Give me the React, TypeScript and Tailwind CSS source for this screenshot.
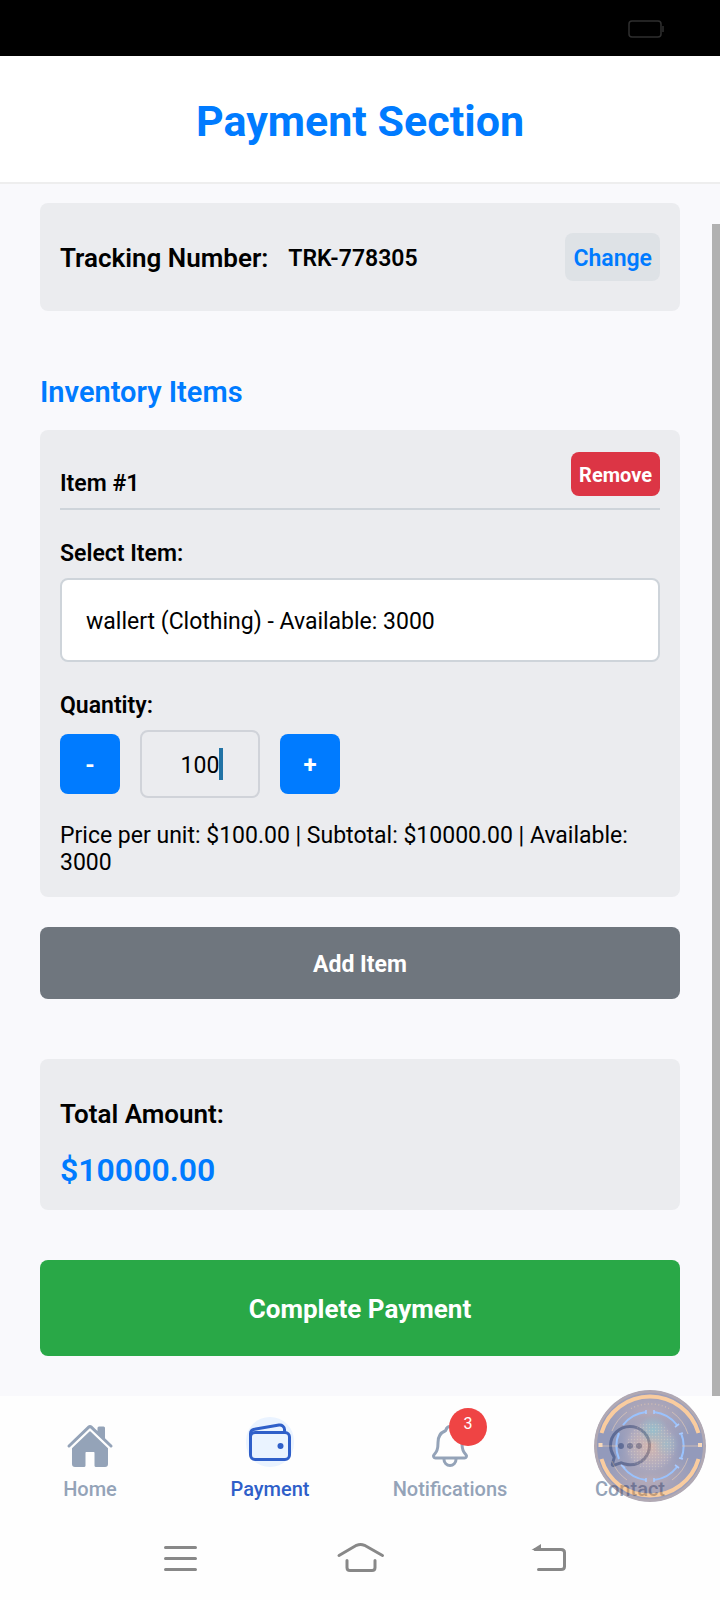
import type { ReactNode } from "react";
import { useState } from "react";
import {
  IoChatbubbleEllipsesOutline,
  IoHome,
  IoNotificationsOutline,
  IoWalletOutline,
} from "react-icons/io5";

function StatusBar() {
  return (
    <div className="flex h-14 items-center justify-end bg-black pt-0.5 pr-[55px]">
      <svg width="38" height="20" viewBox="0 0 38 20" fill="none" aria-hidden="true">
        <rect x="2" y="2" width="32" height="16" rx="3" stroke="#2f2f2f" strokeWidth="1.5" />
        <path d="M36 7v6" stroke="#2f2f2f" strokeWidth="1.5" />
      </svg>
    </div>
  );
}

function NavItem({
  label,
  icon,
  active = false,
  badge,
}: {
  label: string;
  icon: ReactNode;
  active?: boolean;
  badge?: number;
}) {
  return (
    <a
      href="#"
      className={`flex flex-1 flex-col items-center text-xl leading-6 font-medium ${
        active ? "text-[#2f5fc9]" : "text-[#94a3b8]"
      }`}
    >
      <span className={`relative flex h-[53px] w-12 ${active ? "items-start" : "items-end"}`}>
        {active ? (
          <span className="flex h-[50px] items-center rounded-3xl bg-[#eaf3ff] pt-0.5">{icon}</span>
        ) : (
          icon
        )}
        {badge !== undefined && (
          <span className="absolute -top-[9px] -right-[13px] flex size-[38px] justify-center rounded-full bg-[#ef4444] pt-1.5 text-base leading-5 font-normal text-white">
            {badge}
          </span>
        )}
      </span>
      <span className="mt-[7px]">{label}</span>
    </a>
  );
}

function AssistantOrb() {
  return (
    <svg
      className="pointer-events-none absolute -top-1.5 right-3.5 size-28"
      viewBox="0 0 112 112"
      fill="none"
      aria-hidden="true"
    >
      <defs>
        <clipPath id="orb-clip">
          <circle cx="56" cy="56" r="56" />
        </clipPath>
        <radialGradient id="orb-core" cx="0.5" cy="0.5" r="0.5">
          <stop offset="0" stopColor="#a86858" />
          <stop offset="0.6" stopColor="#5c5078" />
          <stop offset="1" stopColor="#1c2c72" stopOpacity="0" />
        </radialGradient>
        <radialGradient id="orb-teal" cx="0.5" cy="0.5" r="0.5">
          <stop offset="0" stopColor="#1c7c98" />
          <stop offset="1" stopColor="#1c7c98" stopOpacity="0" />
        </radialGradient>
        <radialGradient id="orb-haze" cx="0.5" cy="0.5" r="0.5">
          <stop offset="0" stopColor="#6a5068" />
          <stop offset="1" stopColor="#6a5068" stopOpacity="0" />
        </radialGradient>
        <pattern id="orb-dots" width="3" height="3" patternUnits="userSpaceOnUse">
          <circle cx="1.5" cy="1.5" r="0.7" fill="#c8b090" />
        </pattern>
      </defs>
      <g opacity="0.47" clipPath="url(#orb-clip)">
        <circle cx="56" cy="56" r="56" fill="#1c2c72" />
        <ellipse cx="56" cy="24" rx="50" ry="32" fill="url(#orb-haze)" />
        <ellipse cx="56" cy="88" rx="50" ry="32" fill="url(#orb-haze)" />
        <circle cx="56" cy="56" r="54.5" stroke="#5c4c60" strokeWidth="3" />
        <circle cx="56" cy="56" r="34" fill="url(#orb-core)" />
        <circle cx="59" cy="40" r="15" fill="url(#orb-teal)" opacity="0.9" />
        <circle cx="72" cy="54" r="13" fill="url(#orb-teal)" opacity="0.6" />
        <circle cx="57" cy="56" r="24" fill="url(#orb-dots)" opacity="0.4" />
        <path d="M7.5 43a50.5 50.5 0 0 1 97 0M7.5 69a50.5 50.5 0 0 0 97 0" stroke="#f59636" strokeWidth="4" />
        <path
          d="M52 22a34 34 0 0 0-23 13M60 22a34 34 0 0 1 23 13M87 43a34 34 0 0 1 0 26M25 43a34 34 0 0 0 0 26M52 90a34 34 0 0 1-23-13M60 90a34 34 0 0 0 23-13"
          stroke="#2a80ff"
          strokeWidth="2"
        />
        <path
          d="M52 20v4M60 20v4M81 37l4-3M85 44l4-1M85 68l4 1M81 75l4 3M60 88v4M52 88v4M27 75l4 3"
          stroke="#4a90ff"
          strokeWidth="1.6"
        />
        <path d="M37 18.500a42 42 0 0 1 38 0" stroke="#9c7464" strokeWidth="1.4" strokeDasharray="1 2.500" />
        <path
          d="M33 22a42 42 0 0 0-15 19M78 22a42 42 0 0 1 16 22M33 90a42 42 0 0 1-15-19M78 90a42 42 0 0 0 16-22M8 56h16M88 56h16"
          stroke="#b08468"
          strokeWidth="0.8"
        />
        <path d="M4.500 53h4v4h-4zM104 53h4v4h-4z" fill="#f0b070" />
      </g>
    </svg>
  );
}

export default function App() {
  const [quantity, setQuantity] = useState(100);
  const price = 100;
  const total = (quantity * price).toFixed(2);

  return (
    <div className="flex min-h-screen flex-col bg-[#fefefe] font-[Roboto,sans-serif] text-black">
      <StatusBar />
      <header className="border-b-2 border-[#eeeeee] bg-white pt-[41px] pb-[37px]">
        <h1 className="text-center text-[43px] leading-[48px] font-bold text-[#007bff]">Payment Section</h1>
      </header>

      <main className="relative bg-[#f9f9fc] px-10 pt-[19px] pb-10">
        <div className="absolute top-10 right-0 bottom-0 w-2 bg-[#b1b1b1]" />

        <section className="flex items-center rounded-lg bg-[#ebecef] px-5 py-[30px]">
          <h2 className="pt-0.5 text-[26px] leading-8 font-semibold">Tracking Number:</h2>
          <span className="ml-5 pt-1 text-[23px] leading-8 font-semibold">TRK-778305</span>
          <button
            type="button"
            className="ml-auto h-12 rounded-lg bg-[#dee2e6] px-2 pt-1 text-[23px] font-semibold text-[#007bff]"
          >
            Change
          </button>
        </section>

        <h2 className="mt-[65px] mb-[22px] text-[29px] leading-8 font-semibold text-[#007bff]">Inventory Items</h2>

        <section className="rounded-lg bg-[#ebecef] px-5 pt-[22px] pb-[21px]">
          <div className="flex items-end justify-between border-b-2 border-[#ced4da] pb-3">
            <h3 className="text-[23px] leading-6 font-semibold">Item #1</h3>
            <button
              type="button"
              className="h-11 rounded-lg bg-[#dc3545] px-2 pt-0.5 text-xl font-bold text-white"
            >
              Remove
            </button>
          </div>

          <label htmlFor="item" className="mt-[30px] mb-2.5 block text-[23px] leading-7 font-semibold">
            Select Item:
          </label>
          <select
            id="item"
            className="block h-[84px] w-full appearance-none rounded-lg border-2 border-[#ced4da] bg-white px-6 pt-1 text-[23px]"
          >
            <option>wallert (Clothing) - Available: 3000</option>
          </select>

          <label htmlFor="quantity" className="mt-[30px] mb-2.5 block text-[23px] leading-7 font-semibold">
            Quantity:
          </label>
          <div className="flex items-center gap-5">
            <button
              type="button"
              aria-label="Decrease quantity"
              onClick={() => setQuantity(Math.max(0, quantity - 1))}
              className="size-[60px] rounded-lg bg-[#007bff] pt-0.5 text-2xl font-bold text-white"
            >
              -
            </button>
            <div className="relative">
              <input
                id="quantity"
                inputMode="numeric"
                value={quantity}
                onChange={(e) => setQuantity(Number(e.target.value) || 0)}
                className="block h-[68px] w-[120px] rounded-lg border-2 border-[#d0d3d9] bg-transparent pt-0.5 text-center text-[23px]"
              />
              <span className="absolute top-[18px] left-[79px] h-8 w-1 bg-[#2273a5]" />
            </div>
            <button
              type="button"
              aria-label="Increase quantity"
              onClick={() => setQuantity(quantity + 1)}
              className="size-[60px] rounded-lg bg-[#007bff] pt-0.5 text-2xl font-bold text-white"
            >
              +
            </button>
          </div>

          <p className="mt-6 text-[23px] leading-[27px]">
            {`Price per unit: $${price.toFixed(2)} | Subtotal: $${total} | Available: 3000`}
          </p>
        </section>

        <button
          type="button"
          className="mt-[30px] block h-[72px] w-full rounded-lg bg-[#6f767e] pt-1 text-[23px] font-bold text-white"
        >
          Add Item
        </button>

        <section className="mt-[60px] rounded-lg bg-[#ebecef] px-5 pt-[39px] pb-5">
          <h2 className="text-[26px] leading-8 font-semibold">Total Amount:</h2>
          <p className="mt-5 text-[32px] leading-10 font-semibold text-[#007bff]">{`$${total}`}</p>
        </section>

        <button
          type="button"
          className="mt-[50px] block h-24 w-full rounded-lg bg-[#29a847] pt-0.5 text-[26px] font-bold text-white"
        >
          Complete Payment
        </button>
      </main>

      <nav className="relative flex pt-[21px]">
        <NavItem label="Home" icon={<IoHome size={48} />} />
        <NavItem label="Payment" active icon={<IoWalletOutline size={48} />} />
        <NavItem label="Notifications" badge={3} icon={<IoNotificationsOutline size={48} />} />
        <NavItem label="Contact" icon={<IoChatbubbleEllipsesOutline size={48} />} />
        <AssistantOrb />
      </nav>

      <div className="flex justify-center gap-[120px] pt-[33px] pb-[18px]">
        <button type="button" aria-label="Recent apps">
          <svg width="60" height="48" viewBox="0 0 60 48" fill="none" stroke="#888888" strokeWidth="3" strokeLinecap="round">
            <path d="M15.500 13.500h30M15.500 24.500h30M15.500 35.500h30" />
          </svg>
        </button>
        <button type="button" aria-label="Home screen">
          <svg width="60" height="48" viewBox="0 0 60 48" fill="none" stroke="#888888" strokeWidth="3" strokeLinecap="round" strokeLinejoin="round">
            <path d="M9 21.500 26.500 11.300Q30.500 9.500 34.500 11.300L52.500 21.500" />
            <path d="M17 26.500v7q0 3 3 3h22q3 0 3-3v-7" />
          </svg>
        </button>
        <button type="button" aria-label="Back">
          <svg width="60" height="48" viewBox="0 0 60 48" fill="none" stroke="#888888" strokeWidth="3" strokeLinecap="round">
            <path d="M25 15.500h26q3.500 0 3.500 3v14q0 3-3.500 3H28.500" />
            <path d="M21.500 16 31 10v6z" fill="#888888" stroke="none" />
          </svg>
        </button>
      </div>
    </div>
  );
}
